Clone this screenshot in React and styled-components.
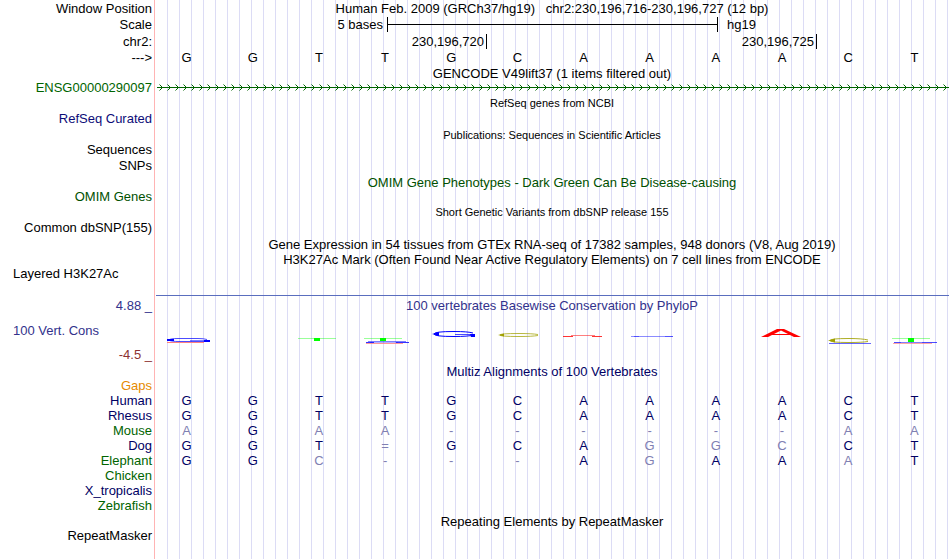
import React from 'react';
import styled, { createGlobalStyle } from 'styled-components';

const colors = {
  black: '#000000',
  navy: '#000064',
  refseq: '#0c0c78',
  green: '#006400',
  omim: '#005000',
  orange: '#e68a00',
  positive: '#32328c',
  negative: '#8c3232',
  faded: '#8080b2',
};

const GlobalStyle = createGlobalStyle`
  body {
    margin: 0;
    background-color: #ffffff;
    color: #000000;
    font-family: 'Liberation Sans', Arial, sans-serif;
    font-size: 13px;
  }
`;

const Browser = styled.main`
  box-sizing: border-box;
  min-height: 100vh;
  padding-right: 1px;
  background:
    linear-gradient(#ffb4b4, #ffb4b4) 154px 0 / 1px 100% no-repeat,
    repeating-linear-gradient(to right, #dcdcf5 0 1px, transparent 1px 12px)
      167px 0 / 100% 100% no-repeat;
`;

const TrackTable = styled.table`
  width: 100%;
  table-layout: fixed;
  border-collapse: collapse;
  line-height: 13px;
`;

const LabelCol = styled.col`
  width: 155px;
`;

const Row = styled.tr`
  height: ${({ $height }) => $height || 15}px;
`;

const Label = styled.th`
  padding: 0 3px 0 13px;
  font-weight: normal;
  white-space: nowrap;
  text-align: ${({ $align }) => $align || 'right'};
  color: ${({ $color }) => $color || colors.black};
`;

const Track = styled.td`
  padding: 0;
  text-align: center;
  white-space: nowrap;
  color: ${({ $color }) => $color || colors.black};
`;

const Title = styled(Track)`
  padding-top: 2px;
  font-size: ${({ $small }) => ($small ? 11 : 13)}px;
`;

const Base = styled.td`
  padding: 0 3px 0 0;
  text-align: center;
  color: ${({ $color }) => $color || colors.black};
`;

const ScaleGrid = styled.div`
  display: grid;
  grid-template-columns: 232fr 331fr 231fr;
  align-items: center;
`;

const ScaleText = styled.span`
  text-align: ${({ $side }) => $side};
  padding: 0 4px 0 9px;
`;

const ScaleBar = styled.div`
  display: flex;
  align-items: center;
  height: 15px;
  border: solid #000000;
  border-width: 0 1px;
  &::before {
    content: '';
    width: 100%;
    height: 1px;
    background-color: #000000;
  }
`;

const Ruler = styled.div`
  display: grid;
  grid-template-columns: 332fr 330fr 132fr;
  line-height: 15px;
`;

const Tick = styled.span`
  padding-right: 2px;
  border-right: 1px solid #000000;
  text-align: right;
`;

const GeneLine = styled.svg`
  display: block;
  width: 100%;
  height: 15px;
`;

const Divider = styled.div`
  height: 1px;
  margin-left: 1px;
  background-color: #5a6ebe;
`;

const Logo = styled.svg`
  display: block;
  width: 100%;
  height: 32px;
`;

const species = [
  { name: 'Human', color: colors.navy, bases: 'GGTTGCAAAACT' },
  { name: 'Rhesus', color: colors.navy, bases: 'GGTTGCAAAACT' },
  { name: 'Mouse', color: colors.green, bases: 'AGAA------AA' },
  { name: 'Dog', color: colors.navy, bases: 'GGT=GCAGGCCT' },
  { name: 'Elephant', color: colors.green, bases: 'GGC---AGAAAT' },
  { name: 'Chicken', color: colors.green },
  { name: 'X_tropicalis', color: colors.navy },
  { name: 'Zebrafish', color: colors.green },
];

const reference = species[0].bases;

const TitleRow = ({ children, color, small, height }) => (
  <Row $height={height}>
    <td />
    <Title colSpan={12} $color={color} $small={small}>
      {children}
    </Title>
  </Row>
);

const LabelRow = ({ label, color, align, height, children }) => (
  <Row $height={height}>
    <Label scope="row" $color={color} $align={align}>
      {label}
    </Label>
    <Track colSpan={12}>{children}</Track>
  </Row>
);

const Gene = () => (
  <GeneLine aria-hidden="true">
    <defs>
      <pattern id="strand" x="2" width="8" height="15" patternUnits="userSpaceOnUse">
        <path d="M2.5 4.5 L5.5 7.5 L2.5 10.5" fill="none" stroke={colors.green} />
      </pattern>
    </defs>
    <rect x="2" width="100%" height="15" fill="url(#strand)" />
    <rect x="2" y="7" width="100%" height="1" fill={colors.green} />
  </GeneLine>
);

const ConservationLogo = () => (
  <Logo viewBox="155 314 794 32" preserveAspectRatio="none" aria-hidden="true">
    <g fill="none" stroke="#ff8080">
      <path d="M167 342.5 H204" />
      <path d="M366 343.5 H403" strokeOpacity="0.8" />
      <path d="M893 343.5 H932" strokeOpacity="0.7" />
    </g>
    <g fill="none" stroke="#0000ff">
      <path d="M207 339.5 Q204 338.5 198 338.5 H178 Q170 338.5 169 340 Q170 341.5 180 341.5 H206" strokeOpacity="0.7" />
      <path d="M190 340.5 H208" strokeOpacity="0.5" />
      <path d="M167 340 H174" strokeWidth="2" />
      <path d="M204 341 H210" strokeWidth="2" />
      <path d="M368 341.5 H406" strokeOpacity="0.5" />
      <path d="M370 342.5 H398" strokeOpacity="0.3" />
      <path d="M366 342.5 H374 M396 342.5 H409" strokeOpacity="0.8" />
      <path d="M473 333 Q468 331.5 454 331.5 Q434 331.5 434 334 Q434 336.5 454 336.5 Q468 336.5 474 335" />
      <path d="M455 334.5 H474" strokeOpacity="0.7" />
      <path d="M432 334 L439 332 V336 Z M470 334 H475 V337 H471 Z" fill="#0000ff" stroke="none" />
      <path d="M631 336.5 H673" strokeOpacity="0.45" />
      <path d="M634 336.5 H639 M665 336.5 H673" strokeOpacity="0.4" />
      <path d="M829 343.5 H871" strokeOpacity="0.6" />
      <path d="M894 342.5 H937" strokeOpacity="0.5" />
      <path d="M894 342.5 H901 M922 342.5 H937" strokeOpacity="0.4" />
    </g>
    <g fill="none" stroke="#a0a000">
      <path d="M538 334.5 Q532 333.5 519 333.5 Q500 333.5 500 335 Q500 336.5 519 336.5 Q532 336.5 538 335.5" strokeOpacity="0.75" />
      <path d="M498 335 L504 333.5 V336.5 Z" fill="#a0a000" stroke="none" />
      <path d="M868 340 Q862 338.5 849 338.5 Q830 338.5 830 340.5 Q830 342.5 849 342.5 Q862 342.5 868 341.5" strokeOpacity="0.85" />
      <path d="M828 340.5 L835 338.5 V342.5 Z" fill="#a0a000" stroke="none" />
    </g>
    <g fill="none" stroke="#ff0000">
      <path d="M563 336.5 H573 M592 336.5 H602" strokeOpacity="0.8" />
      <path d="M571 335.5 H595" strokeOpacity="0.5" />
      <path d="M761 337 L777 329 H784 L801 337 H794 L781 330.5 L768 337 Z" fill="#ff0000" stroke="none" />
      <path d="M771 334.5 H791" />
    </g>
    <g fill="#00ff00">
      <path d="M298 338 H336 V339 H298 Z M364 338 H402 V339 H364 Z M892 338 H930 V339 H892 Z" fillOpacity="0.4" />
      <rect x="314" y="338" width="6" height="3" />
      <rect x="380" y="338" width="6" height="3" />
      <rect x="908" y="338" width="6" height="4" />
    </g>
  </Logo>
);

// A base is faded where it differs from the human sequence.
const BaseCells = ({ bases, aligned }) =>
  bases.split('').map((base, i) => {
    const matchColor = base === reference[i] ? colors.navy : colors.faded;
    return (
      <Base key={i} $color={aligned ? matchColor : colors.black}>
        {base}
      </Base>
    );
  });

const App = () => {
  return (
    <>
      <GlobalStyle />
      <Browser>
        <TrackTable>
          <colgroup>
            <LabelCol />
            <col span={12} />
          </colgroup>
          <tbody>
            <LabelRow label="Window Position" height={16}>
              Human Feb. 2009 (GRCh37/hg19) &nbsp; chr2:230,196,716-230,196,727 (12 bp)
            </LabelRow>
            <LabelRow label="Scale" height={17}>
              <ScaleGrid>
                <ScaleText $side="right">5 bases</ScaleText>
                <ScaleBar />
                <ScaleText $side="left">hg19</ScaleText>
              </ScaleGrid>
            </LabelRow>
            <LabelRow label="chr2:" height={17}>
              <Ruler>
                <Tick>230,196,720</Tick>
                <Tick>230,196,725</Tick>
              </Ruler>
            </LabelRow>
            <Row $height={14}>
              <Label scope="row">---&gt;</Label>
              <BaseCells bases={reference} />
            </Row>
            <TitleRow height={16}>GENCODE V49lift37 (1 items filtered out)</TitleRow>
            <LabelRow label="ENSG00000290097" color={colors.green}>
              <Gene />
            </LabelRow>
            <TitleRow small>RefSeq genes from NCBI</TitleRow>
            <LabelRow label="RefSeq Curated" color={colors.refseq} height={16} />
            <TitleRow small height={16}>
              Publications: Sequences in Scientific Articles
            </TitleRow>
            <LabelRow label="Sequences" />
            <LabelRow label="SNPs" height={16} />
            <TitleRow color={colors.omim} height={16}>
              OMIM Gene Phenotypes - Dark Green Can Be Disease-causing
            </TitleRow>
            <LabelRow label="OMIM Genes" color={colors.omim} />
            <TitleRow small>Short Genetic Variants from dbSNP release 155</TitleRow>
            <LabelRow label="Common dbSNP(155)" height={16} />
            <TitleRow height={16}>
              Gene Expression in 54 tissues from GTEx RNA-seq of 17382 samples, 948 donors (V8, Aug 2019)
            </TitleRow>
            <TitleRow>
              H3K27Ac Mark (Often Found Near Active Regulatory Elements) on 7 cell lines from ENCODE
            </TitleRow>
            <LabelRow label="Layered H3K27Ac" align="left" />
            <Row $height={13}>
              <td colSpan={13} />
            </Row>
            <Row $height={1}>
              <td />
              <Track colSpan={12}>
                <Divider />
              </Track>
            </Row>
            <Row $height={18}>
              <Label $color={colors.positive}>4.88 _</Label>
              <Track colSpan={12} $color={colors.positive}>
                100 vertebrates Basewise Conservation by PhyloP
              </Track>
            </Row>
            <LabelRow label="100 Vert. Cons" color={colors.positive} align="left" height={32}>
              <ConservationLogo />
            </LabelRow>
            <LabelRow label="-4.5 _" color={colors.negative} height={17} />
            <TitleRow color={colors.navy}>Multiz Alignments of 100 Vertebrates</TitleRow>
            <LabelRow label="Gaps" color={colors.orange} />
            {species.map(({ name, color, bases }) => (
              <Row key={name}>
                <Label scope="row" $color={color}>
                  {name}
                </Label>
                {bases ? <BaseCells bases={bases} aligned /> : <Track colSpan={12} />}
              </Row>
            ))}
            <TitleRow>Repeating Elements by RepeatMasker</TitleRow>
            <LabelRow label="RepeatMasker" />
          </tbody>
        </TrackTable>
      </Browser>
    </>
  );
};

export default App;
